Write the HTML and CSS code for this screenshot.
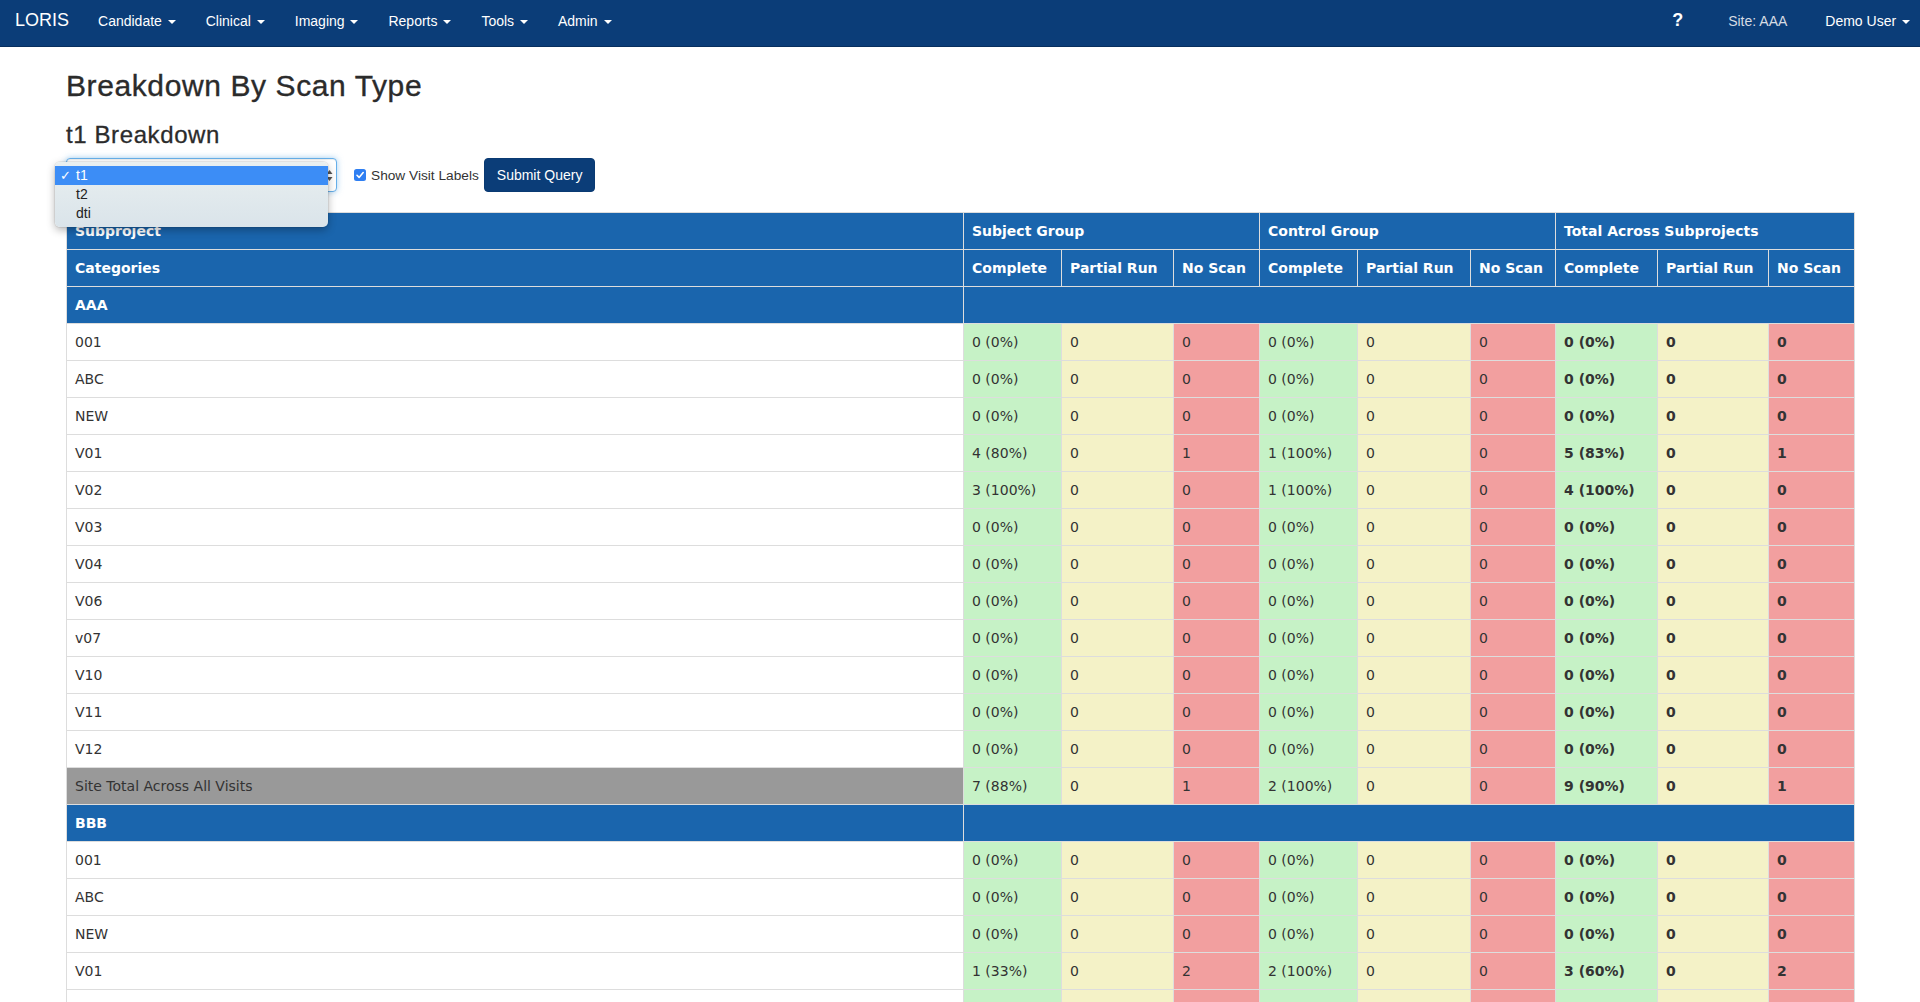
FILE: index.html
```html
<!DOCTYPE html>
<html lang="en">
<head>
<meta charset="utf-8">
<title>LORIS - Statistics</title>
<link rel="stylesheet" href="styles.css">
</head>
<body>
<nav class="navbar">
  <div class="nav-left">
    <span class="brand">LORIS</span>
    <ul class="menu">
      <li>Candidate <span class="caret"></span></li>
      <li>Clinical <span class="caret"></span></li>
      <li>Imaging <span class="caret"></span></li>
      <li>Reports <span class="caret"></span></li>
      <li>Tools <span class="caret"></span></li>
      <li>Admin <span class="caret"></span></li>
    </ul>
  </div>
  <div class="nav-right">
    <span class="help">?</span>
    <span class="site">Site: AAA</span>
    <span class="user">Demo User <span class="caret"></span></span>
  </div>
</nav>

<main class="page">
  <h2 class="title">Breakdown By Scan Type</h2>
  <h3 class="subtitle">t1 Breakdown</h3>

  <form class="filters">
    <div class="select-wrap">
      <div class="select-box">
        <svg class="select-arrows" width="7" height="13" viewBox="0 0 7 13"><path d="M0.5 5 L3.5 1 L6.5 5 Z M0.5 8 L3.5 12 L6.5 8 Z" fill="#555"/></svg>
      </div>
      <ul class="select-menu">
        <li class="active"><span class="check">✓</span>t1</li>
        <li><span class="check"></span>t2</li>
        <li><span class="check"></span>dti</li>
      </ul>
    </div>
    <label class="check-label">
      <svg class="checkbox" width="12" height="12" viewBox="0 0 12 12"><rect x="0" y="0" width="12" height="12" rx="2.5" fill="#2f7ff2"/><path d="M3 6.3 L5.1 8.4 L9.2 3.6" stroke="#fff" stroke-width="1.6" fill="none" stroke-linecap="round" stroke-linejoin="round"/></svg>
      <span>Show Visit Labels</span>
    </label>
    <button type="button" class="btn">Submit Query</button>
  </form>

  <table class="stats">
    <colgroup>
      <col class="w-cat"><col class="w-a"><col class="w-b"><col class="w-c"><col class="w-d"><col class="w-e"><col class="w-f"><col class="w-g"><col class="w-h"><col class="w-i">
    </colgroup>
    <thead>
      <tr><th>Subproject</th><th colspan="3">Subject Group</th><th colspan="3">Control Group</th><th colspan="3">Total Across Subprojects</th></tr>
      <tr><th>Categories</th><th>Complete</th><th>Partial Run</th><th>No Scan</th><th>Complete</th><th>Partial Run</th><th>No Scan</th><th>Complete</th><th>Partial Run</th><th>No Scan</th></tr>
    </thead>
    <tbody>
      <tr class="grp"><td>AAA</td><td colspan="9"></td></tr>
      <tr><td>001</td><td class="g">0 (0%)</td><td class="y">0</td><td class="r">0</td><td class="g">0 (0%)</td><td class="y">0</td><td class="r">0</td><td class="g b">0 (0%)</td><td class="y b">0</td><td class="r b">0</td></tr>
      <tr><td>ABC</td><td class="g">0 (0%)</td><td class="y">0</td><td class="r">0</td><td class="g">0 (0%)</td><td class="y">0</td><td class="r">0</td><td class="g b">0 (0%)</td><td class="y b">0</td><td class="r b">0</td></tr>
      <tr><td>NEW</td><td class="g">0 (0%)</td><td class="y">0</td><td class="r">0</td><td class="g">0 (0%)</td><td class="y">0</td><td class="r">0</td><td class="g b">0 (0%)</td><td class="y b">0</td><td class="r b">0</td></tr>
      <tr><td>V01</td><td class="g">4 (80%)</td><td class="y">0</td><td class="r">1</td><td class="g">1 (100%)</td><td class="y">0</td><td class="r">0</td><td class="g b">5 (83%)</td><td class="y b">0</td><td class="r b">1</td></tr>
      <tr><td>V02</td><td class="g">3 (100%)</td><td class="y">0</td><td class="r">0</td><td class="g">1 (100%)</td><td class="y">0</td><td class="r">0</td><td class="g b">4 (100%)</td><td class="y b">0</td><td class="r b">0</td></tr>
      <tr><td>V03</td><td class="g">0 (0%)</td><td class="y">0</td><td class="r">0</td><td class="g">0 (0%)</td><td class="y">0</td><td class="r">0</td><td class="g b">0 (0%)</td><td class="y b">0</td><td class="r b">0</td></tr>
      <tr><td>V04</td><td class="g">0 (0%)</td><td class="y">0</td><td class="r">0</td><td class="g">0 (0%)</td><td class="y">0</td><td class="r">0</td><td class="g b">0 (0%)</td><td class="y b">0</td><td class="r b">0</td></tr>
      <tr><td>V06</td><td class="g">0 (0%)</td><td class="y">0</td><td class="r">0</td><td class="g">0 (0%)</td><td class="y">0</td><td class="r">0</td><td class="g b">0 (0%)</td><td class="y b">0</td><td class="r b">0</td></tr>
      <tr><td>v07</td><td class="g">0 (0%)</td><td class="y">0</td><td class="r">0</td><td class="g">0 (0%)</td><td class="y">0</td><td class="r">0</td><td class="g b">0 (0%)</td><td class="y b">0</td><td class="r b">0</td></tr>
      <tr><td>V10</td><td class="g">0 (0%)</td><td class="y">0</td><td class="r">0</td><td class="g">0 (0%)</td><td class="y">0</td><td class="r">0</td><td class="g b">0 (0%)</td><td class="y b">0</td><td class="r b">0</td></tr>
      <tr><td>V11</td><td class="g">0 (0%)</td><td class="y">0</td><td class="r">0</td><td class="g">0 (0%)</td><td class="y">0</td><td class="r">0</td><td class="g b">0 (0%)</td><td class="y b">0</td><td class="r b">0</td></tr>
      <tr><td>V12</td><td class="g">0 (0%)</td><td class="y">0</td><td class="r">0</td><td class="g">0 (0%)</td><td class="y">0</td><td class="r">0</td><td class="g b">0 (0%)</td><td class="y b">0</td><td class="r b">0</td></tr>
      <tr class="total"><td>Site Total Across All Visits</td><td class="g">7 (88%)</td><td class="y">0</td><td class="r">1</td><td class="g">2 (100%)</td><td class="y">0</td><td class="r">0</td><td class="g b">9 (90%)</td><td class="y b">0</td><td class="r b">1</td></tr>
      <tr class="grp"><td>BBB</td><td colspan="9"></td></tr>
      <tr><td>001</td><td class="g">0 (0%)</td><td class="y">0</td><td class="r">0</td><td class="g">0 (0%)</td><td class="y">0</td><td class="r">0</td><td class="g b">0 (0%)</td><td class="y b">0</td><td class="r b">0</td></tr>
      <tr><td>ABC</td><td class="g">0 (0%)</td><td class="y">0</td><td class="r">0</td><td class="g">0 (0%)</td><td class="y">0</td><td class="r">0</td><td class="g b">0 (0%)</td><td class="y b">0</td><td class="r b">0</td></tr>
      <tr><td>NEW</td><td class="g">0 (0%)</td><td class="y">0</td><td class="r">0</td><td class="g">0 (0%)</td><td class="y">0</td><td class="r">0</td><td class="g b">0 (0%)</td><td class="y b">0</td><td class="r b">0</td></tr>
      <tr><td>V01</td><td class="g">1 (33%)</td><td class="y">0</td><td class="r">2</td><td class="g">2 (100%)</td><td class="y">0</td><td class="r">0</td><td class="g b">3 (60%)</td><td class="y b">0</td><td class="r b">2</td></tr>
      <tr class="partial"><td></td><td class="g"></td><td class="y"></td><td class="r"></td><td class="g"></td><td class="y"></td><td class="r"></td><td class="g"></td><td class="y"></td><td class="r"></td></tr>
    </tbody>
  </table>
</main>
</body>
</html>
```
FILE: styles.css
```css
html, body {
  margin: 0;
  padding: 0;
  background: #fff;
}
body {
  font-family: "Liberation Sans", Arial, Helvetica, sans-serif;
  font-size: 14px;
  color: #333;
  overflow: hidden;
}

/* ---------- navbar ---------- */
.navbar {
  display: flex;
  justify-content: space-between;
  height: 46px;
  background: #0b3d78;
  border-bottom: 1px solid #072f5e;
  color: #fff;
}
.nav-left {
  display: flex;
}
.brand {
  display: block;
  padding: 10px 14px 0 15px;
  font-size: 18px;
  line-height: 21px;
  color: #fff;
}
.menu {
  display: flex;
  list-style: none;
  margin: 0;
  padding: 0;
}
.menu li {
  padding: 11px 15px 0;
  line-height: 20px;
  color: #fff;
}
.caret {
  display: inline-block;
  width: 0;
  height: 0;
  margin-left: 2px;
  vertical-align: middle;
  border-top: 4px solid;
  border-left: 4px solid transparent;
  border-right: 4px solid transparent;
}
.nav-right {
  display: flex;
  align-items: flex-start;
  padding-right: 10px;
}
.help {
  padding-top: 10px;
  line-height: 21px;
  font-size: 18px;
  font-weight: bold;
  margin-right: 45px;
}
.site {
  padding-top: 11px;
  line-height: 20px;
  color: #d6dbe3;
  margin-right: 38px;
}
.user {
  padding-top: 11px;
  line-height: 20px;
  color: #fff;
}

/* ---------- page ---------- */
.page {
  padding: 0 66px;
}
.title {
  margin: 22px 0 20px;
  font-size: 30px;
  line-height: 33px;
  font-weight: normal;
  letter-spacing: 0.6px;
  color: #2b2b2b;
  -webkit-text-stroke: 0.35px #2b2b2b;
}
.subtitle {
  margin: 0 0 10px;
  font-size: 24px;
  line-height: 26px;
  font-weight: normal;
  letter-spacing: 0.6px;
  color: #2b2b2b;
  -webkit-text-stroke: 0.3px #2b2b2b;
}

/* ---------- filter form ---------- */
.filters {
  display: flex;
  align-items: center;
  height: 34px;
  margin: 0 0 20px;
}
.select-wrap {
  position: relative;
  width: 271px;
  height: 34px;
  margin-right: 17px;
}
.select-box {
  box-sizing: border-box;
  height: 34px;
  border: 1px solid #66afe9;
  border-radius: 4px;
  background: #fff;
  box-shadow: inset 0 1px 1px rgba(0,0,0,.075), 0 0 6px rgba(102,175,233,.6);
  display: flex;
  align-items: center;
  justify-content: flex-end;
  padding-right: 3px;
}
.select-arrows {
  display: block;
}
.select-menu {
  position: absolute;
  z-index: 10;
  left: -11px;
  top: 4px;
  width: 273px;
  margin: 0;
  padding: 4px 0;
  list-style: none;
  border-radius: 5px;
  background: linear-gradient(#e9eff0, #dae4ea);
  box-shadow: 0 3px 9px rgba(0,0,0,.3), 0 0 0 1px rgba(0,0,0,.06);
  font-size: 14px;
  color: #222;
}
.select-menu li {
  display: flex;
  align-items: center;
  height: 19px;
  line-height: 19px;
}
.select-menu li.active {
  background: #3c8df6;
  color: #fff;
}
.check {
  box-sizing: border-box;
  display: inline-block;
  width: 21px;
  padding-left: 5px;
  font-family: "DejaVu Sans", sans-serif;
  font-size: 13px;
}
.check-label {
  display: flex;
  align-items: center;
  font-size: 13.7px;
  color: #333;
}
.checkbox {
  display: block;
  margin-right: 5px;
}
.btn {
  box-sizing: border-box;
  height: 34px;
  margin-left: 5px;
  padding: 6px 12px;
  border: 1px solid #0a3a72;
  border-radius: 4px;
  background: #0b3d78;
  color: #fff;
  font-family: "Liberation Sans", Arial, sans-serif;
  font-size: 14px;
  line-height: 20px;
}

/* ---------- table ---------- */
.stats {
  width: 100%;
  table-layout: fixed;
  border-collapse: collapse;
  border: 1px solid #ddd;
  font-family: "DejaVu Sans", Verdana, sans-serif;
  font-size: 14px;
  color: #333;
}
.w-cat { width: 897px; }
.w-a { width: 98px; }
.w-b { width: 112px; }
.w-c { width: 86px; }
.w-d { width: 98px; }
.w-e { width: 113px; }
.w-f { width: 85px; }
.w-g { width: 102px; }
.w-h { width: 111px; }
.w-i { width: 86px; }

.stats th,
.stats td {
  padding: 8px;
  height: 20px;
  line-height: 20px;
  border: 1px solid #ddd;
  text-align: left;
  white-space: nowrap;
  overflow: hidden;
}
.stats th {
  background: #1a65ad;
  color: #fff;
  font-weight: bold;
}
.stats tr.grp td {
  background: #1a65ad;
  color: #fff;
  font-weight: bold;
}
.stats tr.total td:first-child {
  background: #999;
  color: #333;
}
.stats td.g { background: #c6f2c6; }
.stats td.y { background: #f4f2c7; }
.stats td.r { background: #f29f9f; }
.stats td.b { font-weight: bold; }
```
